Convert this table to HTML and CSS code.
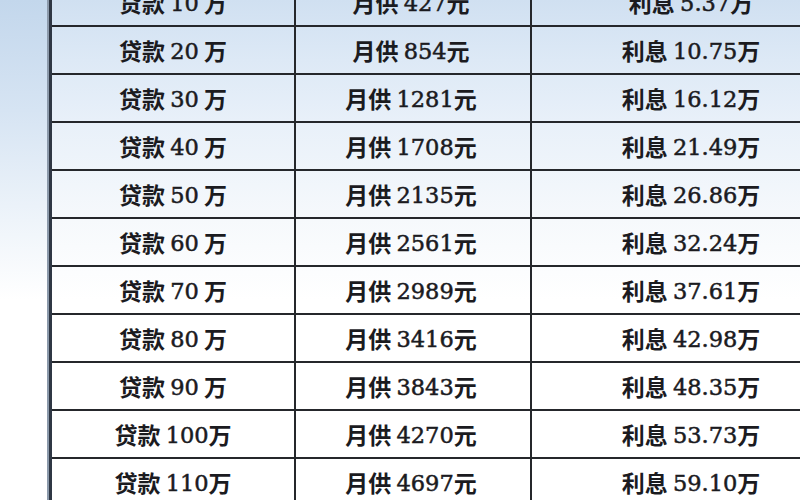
FILE: index.html
```html
<!DOCTYPE html>
<html lang="zh">
<head>
<meta charset="utf-8">
<title>贷款月供利息表</title>
<link rel="stylesheet" href="styles.css">
</head>
<body>
<div class="page">
  <div class="side"></div>
  <div class="sheet">
    <div class="table">
      <div class="row"><div class="c c1">贷款 <span class="n">10</span> 万</div><div class="c c2">月供 <span class="n">427</span>元</div><div class="c c3">利息 <span class="n">5.37</span>万</div></div>
      <div class="row"><div class="c c1">贷款 <span class="n">20</span> 万</div><div class="c c2">月供 <span class="n">854</span>元</div><div class="c c3">利息 <span class="n">10.75</span>万</div></div>
      <div class="row"><div class="c c1">贷款 <span class="n">30</span> 万</div><div class="c c2">月供 <span class="n">1281</span>元</div><div class="c c3">利息 <span class="n">16.12</span>万</div></div>
      <div class="row"><div class="c c1">贷款 <span class="n">40</span> 万</div><div class="c c2">月供 <span class="n">1708</span>元</div><div class="c c3">利息 <span class="n">21.49</span>万</div></div>
      <div class="row"><div class="c c1">贷款 <span class="n">50</span> 万</div><div class="c c2">月供 <span class="n">2135</span>元</div><div class="c c3">利息 <span class="n">26.86</span>万</div></div>
      <div class="row"><div class="c c1">贷款 <span class="n">60</span> 万</div><div class="c c2">月供 <span class="n">2561</span>元</div><div class="c c3">利息 <span class="n">32.24</span>万</div></div>
      <div class="row"><div class="c c1">贷款 <span class="n">70</span> 万</div><div class="c c2">月供 <span class="n">2989</span>元</div><div class="c c3">利息 <span class="n">37.61</span>万</div></div>
      <div class="row"><div class="c c1">贷款 <span class="n">80</span> 万</div><div class="c c2">月供 <span class="n">3416</span>元</div><div class="c c3">利息 <span class="n">42.98</span>万</div></div>
      <div class="row"><div class="c c1">贷款 <span class="n">90</span> 万</div><div class="c c2">月供 <span class="n">3843</span>元</div><div class="c c3">利息 <span class="n">48.35</span>万</div></div>
      <div class="row"><div class="c c1">贷款 <span class="n">100</span>万</div><div class="c c2">月供 <span class="n">4270</span>元</div><div class="c c3">利息 <span class="n">53.73</span>万</div></div>
      <div class="row last"><div class="c c1">贷款 <span class="n">110</span>万</div><div class="c c2">月供 <span class="n">4697</span>元</div><div class="c c3">利息 <span class="n">59.10</span>万</div></div>
    </div>
  </div>
</div>
</body>
</html>
```

FILE: styles.css
```css
html, body {
  margin: 0;
  padding: 0;
  width: 800px;
  height: 500px;
  overflow: hidden;
  background: #ffffff;
}

.page {
  display: flex;
  width: 800px;
  height: 500px;
  overflow: hidden;
}

.side {
  width: 47px;
  flex: none;
  background: linear-gradient(to bottom, #c3d7ec 0px, #d6e4f3 110px, #eef4fa 220px, #ffffff 300px);
  border-right: 2px solid #8c9aab;
}

.sheet {
  flex: 1;
  overflow: hidden;
  border-left: 3px solid #2f3744;
  background: linear-gradient(to bottom, #d0e0f1 0px, #dde9f6 60px, #e8f0f9 120px, #f6f9fc 220px, #ffffff 300px);
}

.table {
  margin-top: -21px;
  width: 800px;
  font-family: "Noto Sans CJK SC", sans-serif;
  font-size: 23px;
  font-weight: 700;
  color: #1b1b1f;
}

.row {
  display: grid;
  grid-template-columns: 244px 236px 318px;
  height: 46px;
  border-bottom: 2px solid #25272b;
}

.c {
  display: flex;
  align-items: center;
  justify-content: center;
  white-space: pre;
}

.n {
  font-family: "DejaVu Serif", serif;
  font-weight: 400;
  font-size: 22.5px;
  margin-top: 2px;
  -webkit-text-stroke: 0.5px #1b1b1f;
}

.c1, .c2 {
  border-right: 2px solid #25272b;
}

.c2 {
  padding-right: 4px;
}
```
